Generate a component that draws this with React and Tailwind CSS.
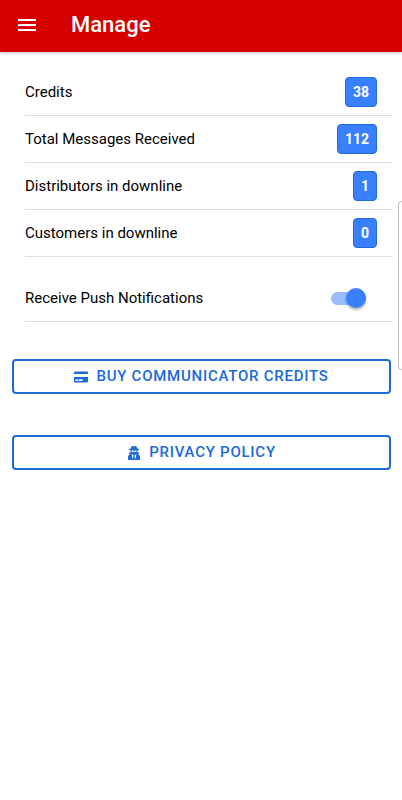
import React, { useState } from 'react';
import { FaCreditCard, FaUserSecret } from 'react-icons/fa';

const stats = [
    { label: 'Credits', value: 38 },
    { label: 'Total Messages Received', value: 112 },
    { label: 'Distributors in downline', value: 1 },
    { label: 'Customers in downline', value: 0 },
];

const Header = ({ title }) => (
    <header className="flex h-[52px] items-center gap-[35px] bg-[#d60000] px-[18px] pb-[2px] text-white shadow-[0_1px_3px_rgba(0,0,0,0.25)]">
        <button type="button" aria-label="Menu" className="py-2">
            <svg width="18" height="12" viewBox="0 0 18 12" fill="currentColor" className="block">
                <path d="M0 0h18v2H0zM0 5h18v2H0zM0 10h18v2H0z" />
            </svg>
        </button>
        <h1 className="text-[22px] leading-7 font-medium">{title}</h1>
    </header>
);

const StatRow = ({ label, value }) => (
    <li className="flex h-[47px] items-center justify-between border-b border-[#dedede] pr-4">
        <span>{label}</span>
        <span className="rounded-[4px] border border-[#1f6ae0] bg-[#3880ff] px-[7px] text-sm leading-7 font-bold text-white">
            {value}
        </span>
    </li>
);

const NotificationToggle = ({ checked, onChange }) => (
    <label className="mt-[18px] flex h-[47px] items-center justify-between border-b border-[#dedede] pr-[27px]">
        <span>Receive Push Notifications</span>
        <input
            type="checkbox"
            role="switch"
            checked={checked}
            onChange={(e) => onChange(e.target.checked)}
            className="flex h-[13px] w-[35px] appearance-none items-center rounded-full bg-gray-300 before:size-5 before:rounded-full before:bg-white before:shadow-[0_2px_3px_rgba(0,0,0,0.3)] checked:justify-end checked:bg-[#98bdff] checked:before:bg-[#3880ff]"
        />
    </label>
);

const OutlineButton = ({ icon: Icon, children }) => (
    <button
        type="button"
        className="flex h-[35px] w-full items-center justify-center gap-2 rounded-[4px] border-2 border-[#1b6ad8] text-[15px] font-medium tracking-wider text-[#1b6ad8] uppercase"
    >
        <Icon className="h-[14px] w-auto" />
        {children}
    </button>
);

const App = () => {
    const [push, setPush] = useState(true);

    return (
        <div className="relative min-h-screen overflow-hidden bg-white font-['Roboto',sans-serif] text-[15px] text-black">
            <Header title="Manage" />

            <main className="pt-[17px]">
                <section className="mr-[9px] ml-[25px]">
                    <ul>
                        {stats.map((stat) => (
                            <StatRow key={stat.label} label={stat.label} value={stat.value} />
                        ))}
                    </ul>
                    <NotificationToggle checked={push} onChange={setPush} />
                </section>

                <section className="mr-[11px] ml-3 flex flex-col gap-[41px] pt-[37px]">
                    <OutlineButton icon={FaCreditCard}>Buy Communicator Credits</OutlineButton>
                    <OutlineButton icon={FaUserSecret}>Privacy Policy</OutlineButton>
                </section>
            </main>

            {/* edge panel handle */}
            <div className="absolute top-[201px] right-0 h-[169px] w-1 rounded-l-[4px] border border-r-0 border-[#c4c4c4] bg-white" />
        </div>
    );
};

export default App;
